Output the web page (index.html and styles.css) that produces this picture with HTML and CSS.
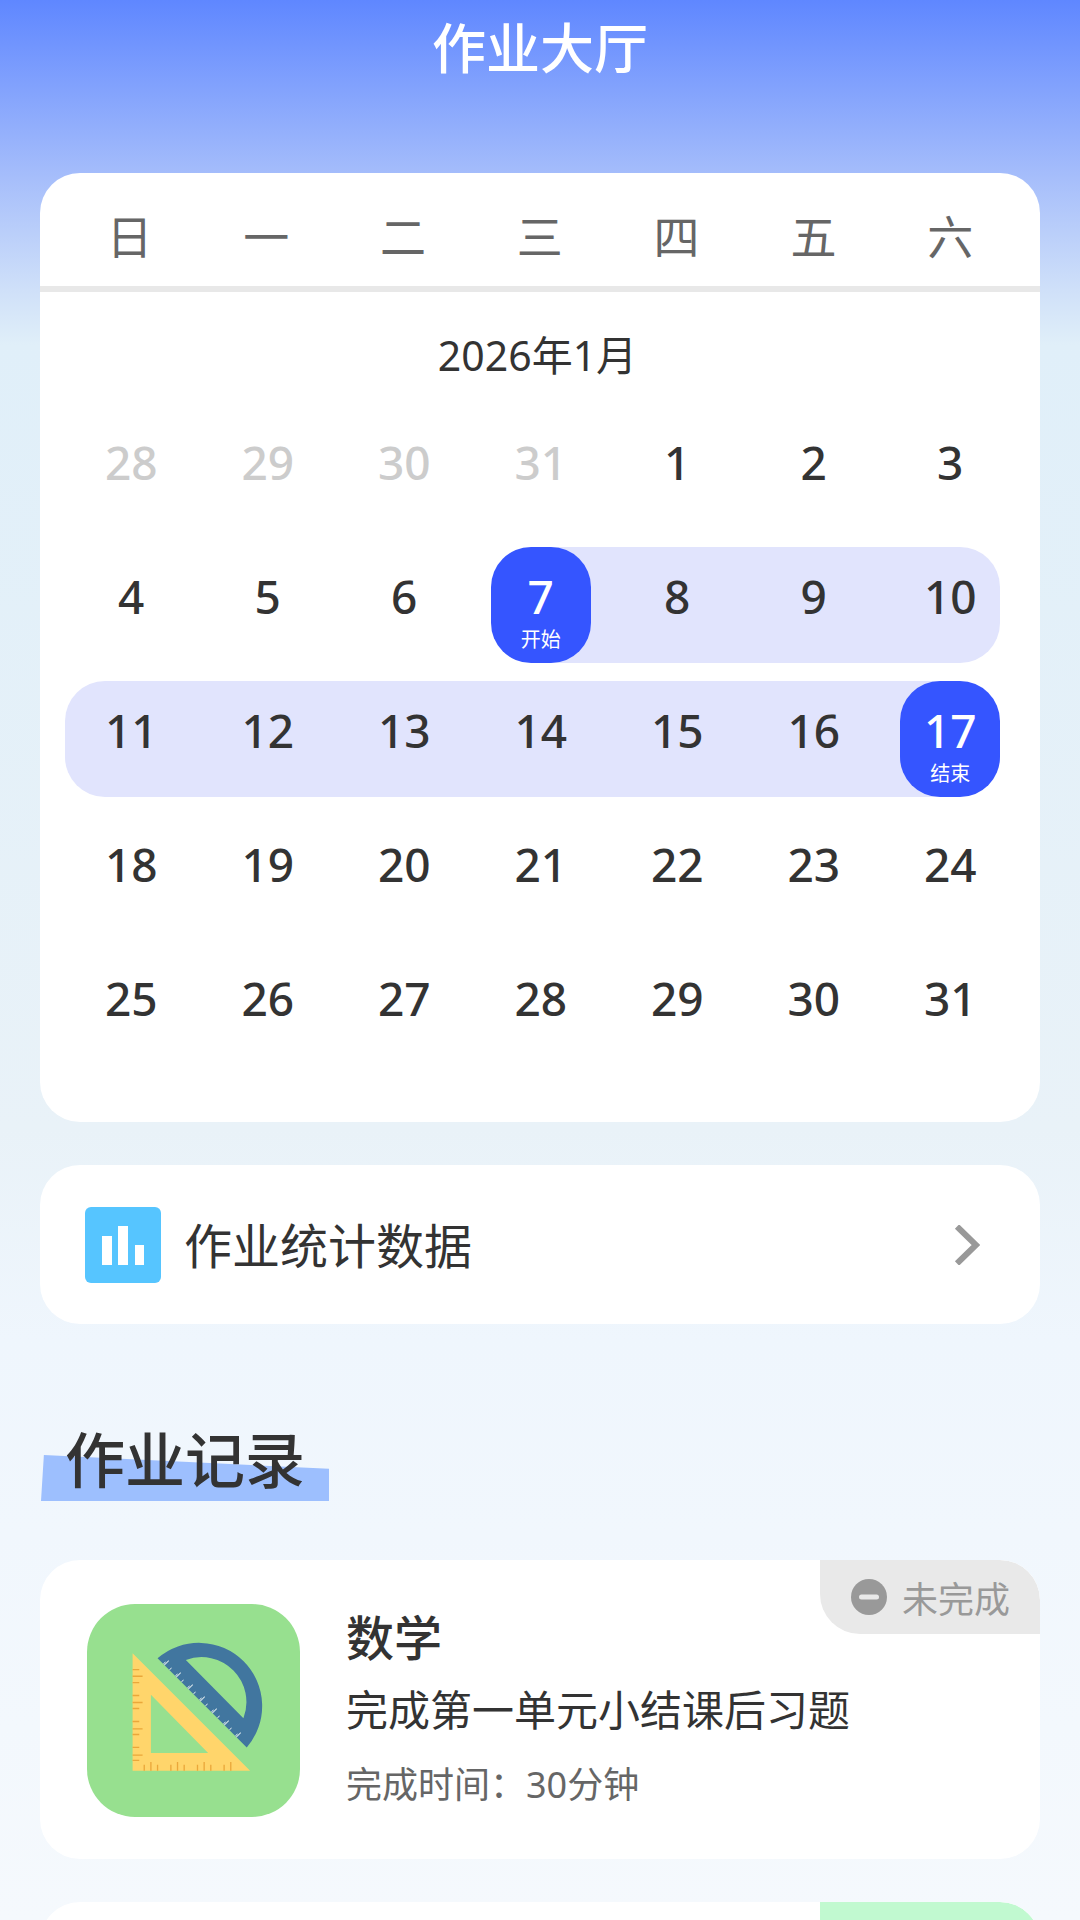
FILE: index.html
```html
<!DOCTYPE html>
<html lang="zh-CN">
<head>
<meta charset="utf-8">
<title>作业大厅</title>
<link rel="stylesheet" href="styles.css">
</head>
<body>
<div class="page">
  <header class="topbar">作业大厅</header>

  <section class="card calendar">
    <div class="weekdays">
      <span>日</span><span>一</span><span>二</span><span>三</span><span>四</span><span>五</span><span>六</span>
    </div>
    <div class="month">2026年1月</div>
    <div class="days">
      <div class="day muted"><b>28</b></div><div class="day muted"><b>29</b></div><div class="day muted"><b>30</b></div><div class="day muted"><b>31</b></div><div class="day"><b>1</b></div><div class="day"><b>2</b></div><div class="day"><b>3</b></div>
      <div class="day"><b>4</b></div><div class="day"><b>5</b></div><div class="day"><b>6</b></div>
      <div class="day range range-from"><div class="pick"><b>7</b><small>开始</small></div></div>
      <div class="day range"><b>8</b></div><div class="day range"><b>9</b></div><div class="day range range-right"><b>10</b></div>
      <div class="day range range-left"><b>11</b></div><div class="day range"><b>12</b></div><div class="day range"><b>13</b></div><div class="day range"><b>14</b></div><div class="day range"><b>15</b></div><div class="day range"><b>16</b></div>
      <div class="day range range-to"><div class="pick"><b>17</b><small>结束</small></div></div>
      <div class="day"><b>18</b></div><div class="day"><b>19</b></div><div class="day"><b>20</b></div><div class="day"><b>21</b></div><div class="day"><b>22</b></div><div class="day"><b>23</b></div><div class="day"><b>24</b></div>
      <div class="day"><b>25</b></div><div class="day"><b>26</b></div><div class="day"><b>27</b></div><div class="day"><b>28</b></div><div class="day"><b>29</b></div><div class="day"><b>30</b></div><div class="day"><b>31</b></div>
    </div>
  </section>

  <section class="card stats">
    <div class="stats-icon">
      <svg width="76" height="76" viewBox="0 0 76 76"><path fill="#fff" d="M17 29h10v29H17zM33 19h10v39H33zM50 38h9v20h-9z"/></svg>
    </div>
    <span class="stats-label">作业统计数据</span>
    <svg class="chevron" width="26" height="40" viewBox="0 0 26 40"><path d="M3 1.500l19 18.500L3 38.500" fill="none" stroke="#999" stroke-width="6"/></svg>
  </section>

  <h2 class="section-title"><span>作业记录</span></h2>

  <article class="card task">
    <div class="task-badge">
      <svg width="36" height="36" viewBox="0 0 36 36"><circle cx="18" cy="18" r="18" fill="#999"/><rect x="8" y="15.5" width="20" height="5" rx="2.5" fill="#e9e9e9"/></svg>
      <span>未完成</span>
    </div>
    <div class="task-icon">
      <svg width="213" height="213" viewBox="0 0 640 640">
        <path fill="#41769f" fill-rule="evenodd" d="M212 163A190 190 0 0 1 480 431ZM297 168L470 343A135 135 0 0 0 297 168Z"/>
        <line x1="232" y1="176" x2="458" y2="402" stroke="#dfe9ee" stroke-width="9" stroke-dasharray="2.500 23"/>
        <line x1="238" y1="176" x2="458" y2="396" stroke="#dfe9ee" stroke-width="19" stroke-dasharray="2.500 48.500"/>
        <path fill="#ffd56b" fill-rule="evenodd" d="M137 148L490 501H137ZM192 273V448H364Z"/>
        <line x1="152" y1="215" x2="152" y2="480" stroke="#eaa73a" stroke-width="30" stroke-dasharray="4 75"/>
        <line x1="147" y1="195" x2="147" y2="480" stroke="#eaa73a" stroke-width="20" stroke-dasharray="4 35"/>
        <line x1="170" y1="492" x2="450" y2="492" stroke="#eaa73a" stroke-width="18" stroke-dasharray="4 36"/>
        <line x1="190" y1="488" x2="450" y2="488" stroke="#eaa73a" stroke-width="26" stroke-dasharray="4 76"/>
      </svg>
    </div>
    <div class="task-body">
      <h3>数学</h3>
      <p class="task-desc">完成第一单元小结课后习题</p>
      <p class="task-time">完成时间：30分钟</p>
    </div>
  </article>

  <article class="card task">
    <div class="task-badge done"></div>
  </article>
</div>
</body>
</html>
```
FILE: styles.css
```css
* { box-sizing: border-box; }
html, body { margin: 0; padding: 0; }
body {
  width: 1080px;
  height: 1920px;
  overflow: hidden;
  font-family: "Noto Sans", "Noto Sans CJK SC", sans-serif;
  color: #333;
}
.page {
  height: 1920px;
  overflow: hidden;
  padding: 0 40px;
  background: linear-gradient(to bottom, #5f87ff 0, #a5bdfb 175px, #cfe0f9 290px, #e0eff9 345px, #e9f2f8 1130px, #eff6fd 1340px, #f5f9fd 1920px);
}
.topbar {
  height: 96px;
  margin-bottom: 77px;
  text-align: center;
  color: #fff;
  font-size: 54px;
  font-weight: 500;
  line-height: 96px;
}
.card {
  background: #fff;
  border-radius: 40px;
}
.calendar {
  height: 949px;
  margin-bottom: 43px;
}
.weekdays {
  display: grid;
  grid-template-columns: repeat(7, 136.8px);
  padding: 28px 20px 15px 21px;
  border-bottom: 6px solid #e8e8e8;
  color: #666;
  font-size: 46px;
  line-height: 70px;
  text-align: center;
}
.month {
  margin: 34px 0 27px;
  padding-right: 5px;
  text-align: center;
  font-size: 41px;
  line-height: 58px;
}
.days {
  display: grid;
  grid-template-columns: repeat(7, 136.5px);
  grid-auto-rows: 116px;
  row-gap: 18px;
  padding: 2px 22px 0 23px;
}
.day {
  position: relative;
  display: flex;
  flex-direction: column;
  align-items: center;
  padding-top: 19px;
  font-size: 46px;
  line-height: 60px;
}
.day b { position: relative; font-weight: 500; }
.muted { color: #ccc; }
.range::before {
  content: "";
  position: absolute;
  inset: 0;
  background: #e1e4fd;
}
.range-from::before { left: 50%; }
.range-to::before { right: 50%; }
.range-right::before { right: 19px; border-radius: 0 40px 40px 0; }
.range-left::before { left: 2px; border-radius: 40px 0 0 40px; }
.range-from, .range-to { padding-top: 0; }
.pick {
  position: relative;
  width: 100px;
  height: 116px;
  padding-top: 19px;
  border-radius: 40px;
  background: #3555ff;
  color: #fff;
  display: flex;
  flex-direction: column;
  align-items: center;
}
.pick small {
  font-size: 20px;
  line-height: 24px;
  margin-top: 2px;
}
.stats {
  height: 159px;
  display: flex;
  align-items: center;
  padding: 0 58px 0 45px;
  margin-bottom: 103px;
}
.stats-icon {
  width: 76px;
  height: 76px;
  border-radius: 6px;
  background: #56c5ff;
  flex: none;
}
.stats-icon svg { display: block; }
.stats-label {
  margin-left: 23px;
  margin-top: -3px;
  font-size: 48px;
  flex: 1;
}
.chevron { display: block; margin-right: 2px; }
.section-title {
  margin: 0 0 63px;
  height: 70px;
  font-size: 60px;
  font-weight: 500;
  line-height: 66px;
  position: relative;
}
.section-title::before {
  content: "";
  position: absolute;
  left: 1px;
  top: 28px;
  width: 288px;
  height: 46px;
  background: #9dbffe;
  clip-path: polygon(1% 0, 100% 30%, 100% 100%, 0 100%);
}
.section-title span { position: relative; margin-left: 25px; }
.task {
  position: relative;
  height: 299px;
  margin-bottom: 43px;
  display: flex;
  padding: 44px 0 0 47px;
  overflow: hidden;
}
.task-badge {
  position: absolute;
  top: 0;
  right: 0;
  width: 220px;
  height: 74px;
  border-radius: 0 40px 0 40px;
  background: #e9e9e9;
  display: flex;
  align-items: center;
  gap: 15px;
  padding-left: 31px;
  color: #999;
  font-size: 36px;
}
.task-badge svg { display: block; flex: none; }
.task-badge.done { background: #c1f9d0; }
.task-icon {
  width: 213px;
  height: 213px;
  border-radius: 48px;
  background: #97e08f;
  flex: none;
}
.task-icon svg { display: block; }
.task-body { margin-left: 46px; }
.task-body h3 {
  margin: 0;
  font-size: 48px;
  font-weight: 500;
  line-height: 68px;
}
.task-desc {
  margin: 8px 0 0;
  font-size: 42px;
  line-height: 60px;
}
.task-time {
  margin: 20px 0 0;
  font-size: 36px;
  line-height: 50px;
  color: #666;
}
```
